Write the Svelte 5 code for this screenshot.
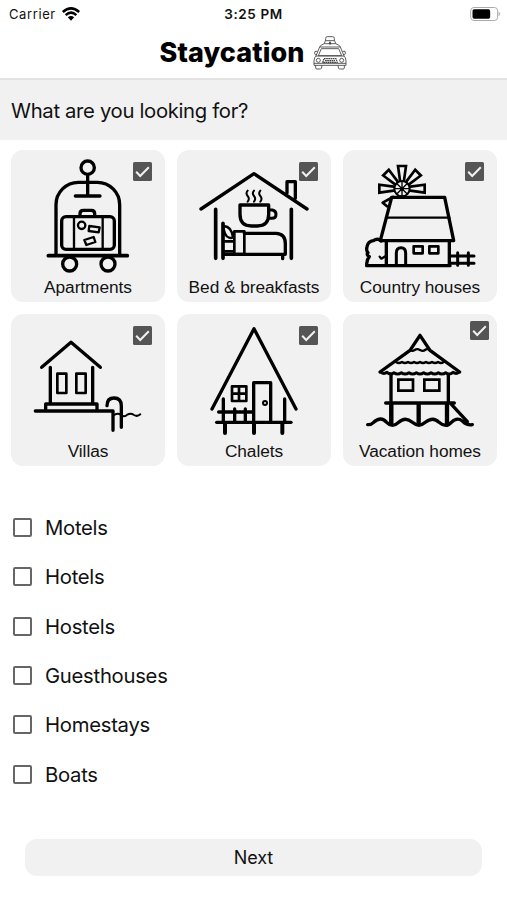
<script>
    let places = $state([
        { id: 'apartments', name: 'Apartments', checked: true, box: '3 6 462 378' },
        { id: 'breakfast', name: 'Bed & breakfasts', checked: true, box: '6 6 462 378' },
        { id: 'country', name: 'Country houses', checked: true, box: '7 6 462 378' },
        { id: 'villas', name: 'Villas', checked: true, box: '3 6 462 378' },
        { id: 'chalets', name: 'Chalets', checked: true, box: '6 6 462 378' },
        { id: 'vacation', name: 'Vacation homes', checked: true, box: '7 6 462 378' },
    ])

    let others = $state([
        { name: 'Motels', checked: false },
        { name: 'Hotels', checked: false },
        { name: 'Hostels', checked: false },
        { name: 'Guesthouses', checked: false },
        { name: 'Homestays', checked: false },
        { name: 'Boats', checked: false },
    ])

    function toggle(item) {
        item.checked = !item.checked
    }
</script>

{#snippet checkbox(checked)}
    <svg class="checkbox" viewBox="0 0 19 19">
        {#if checked}
            <rect width="19" height="19" rx="1.5" fill="#555" />
            <path d="M3.2 9.8 L7.2 14 L15.8 5.2" fill="none" stroke="#f1f1f1" stroke-width="2" />
        {:else}
            <rect x="1" y="1" width="17" height="17" rx="1" fill="none" stroke="#666" stroke-width="2" />
        {/if}
    </svg>
{/snippet}

<div class="screen">
    <div class="status">
        <div class="carrier">
            <span>Carrier</span>
            <svg class="wifi" viewBox="0 0 54 42">
                <g fill="none" stroke="#000" stroke-width="7.500">
                    <path d="M2.500 15 Q27 -7 51.500 15" />
                    <path d="M11 24.500 Q27 9.500 43 24.500" />
                </g>
                <path d="M17.500 31 Q27 23 36.500 31 L27 41 Z" />
            </svg>
        </div>
        <span class="time">3:25 PM</span>
        <div class="battery">
            <svg viewBox="0 0 92 42">
                <rect x="1.500" y="1.500" width="81" height="39" rx="10" fill="none" stroke="#aaa" stroke-width="3" />
                <rect x="7" y="7" width="53" height="28" rx="5" />
                <path d="M86 15 Q92 21 86 27 Z" fill="#aaa" stroke="#aaa" stroke-width="1" />
            </svg>
        </div>
    </div>

    <header>
        <h1>Staycation</h1>
        <svg class="taxi" viewBox="0 0 102 102" fill="none" stroke="#444" stroke-width="2.600" stroke-linejoin="round">
            <path d="M38 14 V7 Q38 2 43 2 H59 Q64 2 64 7 V14 M34 23 L37 14 H65 L68 23" />
            <path d="M20 33 L25 27 L34 23 H68 L77 27 L82 33 Z" />
            <path d="M51 17 L54 24 H48 Z" fill="#444" />
            <path d="M20 33 L8 62 M82 33 L94 62 M25 38 H77 L86 59 H16 Z" />
            <path d="M13 46 H6 Q3 52 7 56 H11 M89 46 H96 Q99 52 95 56 H91" />
            <path d="M10 60 H92 Q99 63 99 75 V88 H3 V75 Q3 63 10 60 Z M3 82 H99" />
            <circle cx="16" cy="73" r="6" />
            <circle cx="86" cy="73" r="6" />
            <path d="M33 68 H69 L73 79 H29 Z M36 74 H66" stroke-width="3.500" stroke-dasharray="5 1.500" />
            <path d="M8 88 V96 Q8 99 12 99 H23 Q26 99 27 88 M75 88 Q76 99 79 99 H90 Q94 99 94 96 V88" />
        </svg>
    </header>

    <div class="question">What are you looking for?</div>

    <div class="places">
        {#each places as place}
            <button class="card" onclick={() => toggle(place)}>
                <svg class="picture" viewBox={place.box} fill="none" stroke="#000" stroke-width="10" stroke-linecap="round" stroke-linejoin="round">
                    {#if place.id === 'apartments'}
                        <circle cx="233" cy="59" r="20" />
                        <path d="M233 80 V142 M196 144 H270" />
                        <path d="M138 322 V170 A67 67 0 0 1 205 103 H262 A67 67 0 0 1 329 170 V322" />
                        <path d="M115 323 H352" stroke-width="11" />
                        <circle cx="179" cy="348" r="21" />
                        <circle cx="294" cy="348" r="21" />
                        <rect x="155" y="206" width="158" height="98" rx="13" />
                        <path d="M210 205 V197 Q210 187 220 187 H244 Q254 187 254 197 V205" />
                        <path d="M192 208 V302 M278 208 V302" stroke-width="7" />
                        <circle cx="215" cy="232" r="11" stroke-width="7" />
                        <path d="M238 234 L269 238 L266 253 L236 249 Z M223 276 L251 267 L256 282 L229 291 Z" stroke-width="7" />
                    {:else if place.id === 'breakfast'}
                        <path d="M78 183 L237 77 L396 183" />
                        <path d="M336 135 V101 H361 V151" />
                        <path d="M122 184 V331 M349 184 V331 M144 226 V331" stroke-width="11" />
                        <path d="M195 171 H281 V199 Q281 234 247 234 H229 Q195 234 195 199 Z" />
                        <path d="M282 186 H292 Q303 188 303 199 Q303 211 291 211 H281" stroke-width="9" />
                        <path d="M218 128 Q211 136 218 144 T218 161 M237 128 Q230 136 237 144 T237 161 M256 128 Q249 136 256 144 T256 161" stroke-width="6" />
                        <path d="M146 234 Q171 236 174 269 Q152 275 146 243" stroke-width="7" />
                        <path d="M146 280 H174 M146 310 H176 M178 250 H208 V318 H178 Z" stroke-width="8" />
                        <path d="M208 256 H303 Q331 257 331 287 V319 H146 M323 320 V332" />
                    {:else if place.id === 'country'}
                        <g stroke-width="8" stroke-linejoin="miter">
                            {#each [-90, -45, 0, 45, 90] as angle}
                                <path d="M178 97 L172 54 H196 L190 97" transform="rotate({angle} 184 122)" />
                            {/each}
                        </g>
                        <circle cx="184" cy="122" r="23" stroke-width="6" />
                        <path d="M184 101 V143 M163 122 H205 M169 107 L199 137 M199 107 L169 137" stroke-width="4" />
                        <circle cx="184" cy="122" r="6" fill="#000" stroke="none" />
                        <path d="M157 147 L126 164 L139 175" stroke-width="8" />
                        <path d="M153 148 H312 L339 278 H119 Z" />
                        <path d="M136 209 H326" stroke-width="7" />
                        <path d="M137 280 V353 M326 280 V353 M78 353 H328" />
                        <path d="M167 352 V315 Q167 299 181 299 Q195 299 195 315 V352" stroke-width="9" />
                        <path d="M219 295 H246 V316 H219 Z M266 295 H293 V316 H266 Z" stroke-width="8" />
                        <path d="M122 279 Q111 269 98 278 Q82 280 79 296 Q76 309 82 314 Q76 320 86 326 Q76 338 79 352" />
                        <path d="M117 326 L122 332 L134 325" stroke-width="7" />
                        <path d="M331 324 H400 M331 346 H400 M351 314 V352 M383 314 V352" stroke-width="9" />
                    {:else if place.id === 'villas'}
                        <path d="M95 166 L183 91 L271 166" />
                        <path d="M121 166 V272 M248 166 V272" />
                        <path d="M107 292 V276 H261 V292" />
                        <path d="M142 185 H169 V243 H142 Z M199 185 H227 V243 H199 Z" stroke-width="8" />
                        <path d="M76 297 H309 V355" />
                        <path d="M291 281 Q291 258 312 258 Q334 258 334 282 V346" />
                        <path d="M314 308 Q324 302 333 309 Q343 317 352 308 Q362 302 372 309 Q382 315 391 307" stroke-width="6" />
                    {:else if place.id === 'chalets'}
                        <path d="M111 291 L237 50 L363 291" />
                        <path d="M236 329 V212 H287 V329" />
                        <circle cx="270" cy="273" r="6" stroke-width="6" />
                        <path d="M171 223 H214 V267 H171 Z M192 223 V267 M171 245 H214" stroke-width="8" />
                        <path d="M145 261 V330 M179 291 V330 M211 291 V330 M329 261 V330 M131 300 H232" />
                        <path d="M125 331 H348" />
                        <path d="M150 334 V363 M237 334 V363 M322 334 V363" stroke-width="12" />
                    {:else}
                        <path d="M118 180 L208 115 L238 70 L268 115 L357 180" />
                        <path d="M208 114 Q215 119 222 114 T238 114 T253 114 T268 114" stroke-width="7" />
                        <path d="M166 150 Q175 156 184 150 Q193 156 202 150 Q211 156 220 150 Q229 156 238 150 Q247 156 256 150 Q265 156 274 150 Q283 156 292 150 Q301 156 309 150" stroke-width="7" />
                        <path d="M120 180 Q129 188 139 181 Q149 190 160 182 Q171 190 182 182 Q193 190 205 182 Q216 190 227 182 Q238 190 249 182 Q260 190 271 182 Q282 190 293 182 Q304 190 315 182 Q326 190 337 181 Q347 188 355 180" stroke-width="9" />
                        <path d="M151 188 V334 M323 188 V270 M135 273 H341" />
                        <path d="M173 203 H217 V236 H173 Z M251 203 H296 V236 H251 Z" stroke-width="8" stroke-linejoin="miter" />
                        <path d="M152 277 V334 M234 277 V332 M319 277 V332" stroke-width="13" />
                        <path d="M333 278 L380 329" />
                        <path d="M81 338 Q91 339 99 331 Q121 311 138 331 Q155 349 174 331 Q194 312 215 331 Q235 348 254 331 Q277 312 295 331 Q316 349 332 331 Q349 314 365 327 Q379 341 395 338" />
                    {/if}
                </svg>
                <span class="name">{place.name}</span>
                <span class="mark" class:high={place.id === 'vacation'}>{@render checkbox(place.checked)}</span>
            </button>
        {/each}
    </div>

    <div class="others">
        {#each others as other}
            <button class="row" onclick={() => toggle(other)}>
                {@render checkbox(other.checked)}
                <span>{other.name}</span>
            </button>
        {/each}
    </div>

    <button class="next">Next</button>
</div>

<style>
    :global(body) {
        margin: 0;
        background: #fff;
    }

    .screen {
        width: 507px;
        height: 900px;
        overflow: hidden;
        background: #fff;
        color: #111;
        font-family: Inter, "Liberation Sans", sans-serif;
    }

    button {
        border: 0;
        padding: 0;
        color: inherit;
        font-family: inherit;
    }

    svg {
        display: block;
        flex: none;
    }

    .status {
        height: 27px;
        padding: 0 6px 0 9px;
        display: grid;
        grid-template-columns: 1fr auto 1fr;
        align-items: center;
        font-size: 13px;
        box-sizing: border-box;
    }

    .carrier {
        display: flex;
        align-items: center;
        gap: 6px;
        letter-spacing: 0.6px;
    }

    .wifi {
        width: 18px;
        height: 14px;
    }

    .time {
        margin-right: 3px;
        font-size: 13.5px;
        font-weight: 600;
        letter-spacing: 0.6px;
    }

    .battery {
        display: flex;
        justify-content: flex-end;
    }

    .battery svg {
        width: 31px;
        height: 14px;
    }

    header {
        height: 51px;
        display: flex;
        justify-content: center;
        align-items: center;
        gap: 9px;
        border-bottom: 2px solid #e2e2e2;
    }

    h1 {
        margin: 0;
        font-size: 27px;
        line-height: 34px;
        font-weight: 800;
        letter-spacing: 0.1px;
        color: #000;
    }

    .taxi {
        width: 34px;
        height: 34px;
    }

    .question {
        height: 60px;
        padding-left: 11px;
        display: flex;
        align-items: center;
        background: #f1f1f1;
        font-size: 20.3px;
        letter-spacing: -0.33px;
    }

    .places {
        margin: 10px 10px 0 11px;
        display: grid;
        grid-template-columns: repeat(3, 154px);
        justify-content: space-between;
        row-gap: 12px;
    }

    .card {
        position: relative;
        height: 152px;
        display: flex;
        flex-direction: column;
        align-items: center;
        background: #f1f1f1;
        border-radius: 12px;
    }

    .picture {
        width: 154px;
        height: 126px;
    }

    .name {
        font-family: "Liberation Sans", Arial, sans-serif;
        font-size: 17.3px;
        line-height: 23px;
        letter-spacing: -0.05px;
        white-space: nowrap;
    }

    .mark {
        position: absolute;
        top: 12px;
        right: 13px;
    }

    .mark.high {
        top: 7px;
        right: 8px;
    }

    .checkbox {
        width: 19px;
        height: 19px;
    }

    .others {
        margin: 37px 13px 0;
        display: flex;
        flex-direction: column;
    }

    .row {
        height: 49.3px;
        display: flex;
        align-items: center;
        gap: 13px;
        background: none;
        font-size: 20.3px;
        letter-spacing: -0.28px;
    }

    .next {
        display: block;
        width: 457px;
        height: 37px;
        margin: 40px 0 0 25px;
        background: #f1f1f1;
        border-radius: 12px;
        font-size: 18px;
        letter-spacing: -0.1px;
    }
</style>
